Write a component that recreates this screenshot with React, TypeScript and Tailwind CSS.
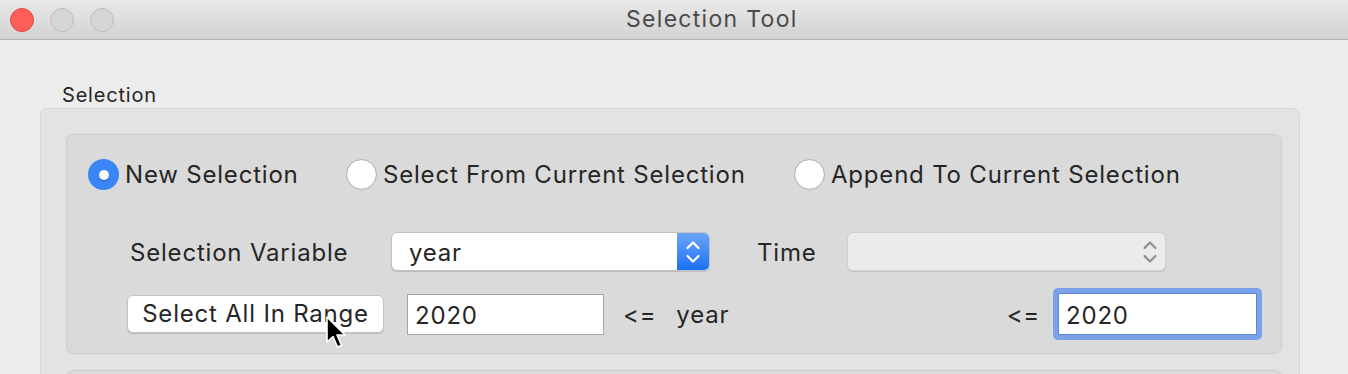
import React from 'react';

const font = { fontFamily: 'Inter, "Noto Sans", sans-serif' };

const Radio = ({ checked, label, width }: { checked?: boolean; label: string; width: string }) => (
  <div className={`flex items-center gap-[6px] ${width}`}>
    {checked ? (
      <span className="w-[31px] h-[31px] rounded-full bg-[#3a86f7] flex items-center justify-center shrink-0">
        <span className="w-[10px] h-[10px] rounded-full bg-white shadow-[0_1px_1px_rgba(0,0,0,0.25)]" />
      </span>
    ) : (
      <span className="w-[31px] h-[31px] rounded-full bg-white border border-[#adadad] shadow-[inset_0_-1px_2px_rgba(0,0,0,0.08)] shrink-0" />
    )}
    <span className="text-[24px] tracking-[0.8px] text-[#262626] whitespace-nowrap">{label}</span>
  </div>
);

const Chevrons = ({ color }: { color: string }) => (
  <svg width="16" height="26" viewBox="0 0 16 26" fill="none" stroke={color} strokeWidth="2.2" strokeLinecap="round" strokeLinejoin="round">
    <path d="M2.5 9 L8 3.5 L13.5 9" />
    <path d="M2.5 17 L8 22.5 L13.5 17" />
  </svg>
);

const txt = 'text-[24px] tracking-[0.8px] text-[#262626]';

const App: React.FC = () => {
  return (
    <div className="w-[1348px] h-[374px] overflow-hidden bg-[#ececec] relative" style={font}>
      {/* title bar */}
      <div className="h-[40px] bg-gradient-to-b from-[#e9e9e9] to-[#d2d2d2] border-b border-[#b3b3b3] flex items-center">
        <div className="flex items-center gap-[16px] pl-[10px]">
          <span className="w-[24px] h-[24px] rounded-full bg-[#fe5f57] border border-[#e2463f]" />
          <span className="w-[24px] h-[24px] rounded-full bg-[#d5d5d5] border border-[#bdbdbd]" />
          <span className="w-[24px] h-[24px] rounded-full bg-[#d5d5d5] border border-[#bdbdbd]" />
        </div>
        <span className="ml-[512px] text-[23px] tracking-[1.3px] text-[#4b4b4b]">Selection Tool</span>
      </div>

      <div className="pl-[40px] pr-[48px] pt-[42px]">
        <div className="pl-[22px] text-[20px] tracking-[0.8px] text-[#262626] leading-[26px]">Selection</div>
        <div className="bg-[#e3e3e3] border border-[#d6d6d6] rounded-[7px] pl-[25px] pr-[17px] pt-[25px] pb-[40px]">
          <div className="bg-[#dadada] border border-[#cecece] rounded-[7px] pl-[21px] pt-[24px] pb-[13px]">
            {/* radio row */}
            <div className="flex items-center h-[31px]">
              <Radio checked label="New Selection" width="w-[258px]" />
              <Radio label="Select From Current Selection" width="w-[448px]" />
              <Radio label="Append To Current Selection" width="w-[420px]" />
            </div>

            {/* variable row */}
            <div className="flex items-center h-[39px] mt-[42px] pl-[42px]">
              <span className={`w-[261px] pt-[2px] ${txt}`}>Selection Variable</span>
              <div className="w-[319px] h-[39px] bg-white rounded-[6px] border border-[#c2c2c2] shadow-[0_1px_1px_rgba(0,0,0,0.15)] flex items-center overflow-hidden">
                <span className={`flex-1 pl-[17px] pt-[2px] ${txt}`}>year</span>
                <span className="w-[32px] h-full bg-gradient-to-b from-[#69a5fa] to-[#1870f5] flex items-center justify-center">
                  <Chevrons color="#ffffff" />
                </span>
              </div>
              <span className={`ml-[47px] w-[90px] pt-[2px] ${txt}`}>Time</span>
              <div className="w-[319px] h-[39px] bg-[#ebebeb] rounded-[6px] border border-[#d0d0d0] shadow-[0_1px_1px_rgba(0,0,0,0.12)] flex items-center justify-end pr-[7px]">
                <Chevrons color="#8e8e8e" />
              </div>
            </div>

            {/* range row */}
            <div className="flex items-center h-[52px] mt-[17px] pl-[39px]">
              <button className={`w-[257px] h-[38px] bg-white rounded-[6px] border border-[#c4c4c4] shadow-[0_1px_1px_rgba(0,0,0,0.15)] cursor-default ${txt}`}>
                Select All In Range
              </button>
              <div className={`ml-[23px] w-[197px] h-[41px] bg-white border border-[#a6a6a6] flex items-center pl-[7px] pt-[4px] ${txt}`}>
                2020
              </div>
              <span className={`ml-[19px] pt-[2px] ${txt}`}>&lt;=</span>
              <span className={`ml-[20px] pt-[2px] ${txt}`}>year</span>
              <span className={`ml-auto pt-[2px] ${txt}`}>&lt;=</span>
              <div className="ml-[13px] mr-[19px] w-[209px] h-[52px] rounded-[5px] bg-[#79a2e8] p-[5px]">
                <div className={`w-full h-full bg-white border border-[#5a86d6] flex items-center pl-[7px] pt-[4px] ${txt}`}>
                  2020
                </div>
              </div>
            </div>
          </div>
          <div className="mt-[16px] h-[20px] bg-[#dadada] border border-[#cecece] rounded-[7px]" />
        </div>
      </div>

      {/* mouse pointer */}
      <svg className="absolute left-[325px] top-[316px]" width="22" height="34" viewBox="0 0 22 34">
        <path d="M2 1 L2 26 L8 20.5 L12.5 31 L16.5 29.3 L12 19 L20 19 Z" fill="#000" stroke="#fff" strokeWidth="1.6" strokeLinejoin="round" />
      </svg>
    </div>
  );
};

export default App;
